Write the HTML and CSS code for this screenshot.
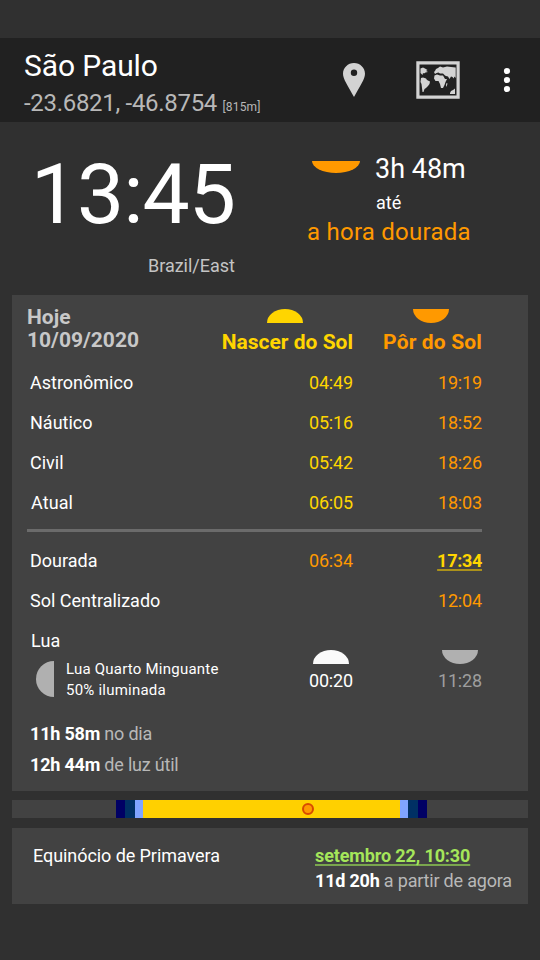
FILE: index.html
```html
<!DOCTYPE html>
<html lang="pt-BR">
<head>
<meta charset="utf-8">
<title>São Paulo</title>
<link rel="stylesheet" href="styles.css">
</head>
<body>
<header class="appbar">
  <div class="place">
    <div class="place-name">São Paulo</div>
    <div class="coords"><span class="latlon">-23.6821, -46.8754</span> <span class="altitude">[815m]</span></div>
  </div>
  <svg class="icon-pin" viewBox="0 0 22 34"><path fill-rule="evenodd" d="M11 0C4.900 0 0 4.800 0 10.700C0 16 4.800 22.500 11 34C17.200 22.500 22 16 22 10.700C22 4.800 17.100 0 11 0ZM11 6.600a3.200 3.200 0 1 1 0 6.400a3.200 3.200 0 1 1 0-6.400Z"/></svg>
  <svg class="icon-map" viewBox="0 0 44 38">
    <path fill-rule="evenodd" d="M0.300 0.300H43.700V37.700H0.300ZM3.500 3.500V34.500H40.500V3.500Z"/>
    <path d="M4.500 7.500L7 6.500L9 7.500L11.500 9L10 10L12 11L9.500 11.500L8 12.500L7 12L6.500 14L5 12.500L4.500 12ZM5 17L7 16.500L10 17.500L11 19L14 20.500L13.500 23L12 25L10 27L8.500 28L7.500 31L6.500 31L6 27L5.500 23L4.500 21ZM19 10L20 8L22 7L24 5.500L27 6.500L31 5.500L35 6L39.700 6.500V17L38.500 15.500L37.500 17.500L36.500 16L35 15.500L33.500 18L32 15.500L30 15L29 14.500L27 12.500L24 12.500L22.500 11.500L20.500 12L19 13L18 11ZM18.500 14.500L21 13.500L24 14.500L27 14.500L29 18L31 18L29.500 21L28.500 24L27 27L25 27L24 23L22.500 20L19.500 20L18 17.500ZM30.500 22L31.500 22.500L30.500 26L30 24ZM34 32L35 30L37 29L39 27.500V33H34Z"/>
  </svg>
  <svg class="icon-more" viewBox="0 0 6 24"><circle cx="3" cy="3" r="3.100"/><circle cx="3" cy="12" r="3.100"/><circle cx="3" cy="21" r="3.100"/></svg>
</header>

<section class="now">
  <div class="clock">
    <div class="time">13:45</div>
    <div class="zone">Brazil/East</div>
  </div>
  <div class="countdown">
    <div class="remaining"><i class="half down wide orange-bg"></i><span class="duration">3h 48m</span></div>
    <div class="until">até</div>
    <div class="event">a hora dourada</div>
  </div>
</section>

<section class="card sun">
  <div class="row head">
    <div class="date">Hoje<br>10/09/2020</div>
    <div class="col-title rise yellow"><i class="half up yellow-bg"></i><span>Nascer do Sol</span></div>
    <div class="col-title set orange"><i class="half down orange-bg"></i><span>Pôr do Sol</span></div>
  </div>
  <div class="row"><span class="label">Astronômico</span><span class="yellow">04:49</span><span class="orange">19:19</span></div>
  <div class="row"><span class="label">Náutico</span><span class="yellow">05:16</span><span class="orange">18:52</span></div>
  <div class="row"><span class="label">Civil</span><span class="yellow">05:42</span><span class="orange">18:26</span></div>
  <div class="row"><span class="label actual">Atual</span><span class="yellow">06:05</span><span class="orange">18:03</span></div>
  <div class="divider"></div>
  <div class="row"><span class="label">Dourada</span><span class="orange">06:34</span><span class="next yellow"><u>17:34</u></span></div>
  <div class="row"><span class="label">Sol Centralizado</span><span></span><span class="orange">12:04</span></div>
  <div class="row moon">
    <div class="moon-info">
      <div class="label moon-label">Lua</div>
      <div class="phase"><i class="quarter"></i><div class="phase-text"><span class="phase-name">Lua Quarto Minguante</span><br>50% iluminada</div></div>
    </div>
    <div class="moon-time white"><i class="half up white-bg"></i><span>00:20</span></div>
    <div class="moon-time gray"><i class="half down gray-bg"></i><span>11:28</span></div>
  </div>
  <div class="lengths">
    <div><b>11h 58m</b> no dia</div>
    <div><b>12h 44m</b> de luz útil</div>
  </div>
</section>

<div class="timeline">
  <i class="astro"></i><i class="nautical"></i><i class="civil"></i><i class="day"></i><i class="civil"></i><i class="nautical"></i><i class="astro"></i>
  <span class="marker"></span>
</div>

<section class="card season">
  <div class="season-name">Equinócio de Primavera</div>
  <div class="season-when">
    <div class="season-date"><u>setembro 22, 10:30</u></div>
    <div class="season-left"><b>11d 20h</b> a partir de agora</div>
  </div>
</section>
</body>
</html>
```
FILE: styles.css
```css
* { box-sizing: border-box; }

body {
  margin: 0;
  padding-top: 38px;
  width: 540px;
  height: 960px;
  overflow: hidden;
  background: #303030;
  color: #fff;
  font: 18px/40px Roboto, sans-serif;
  white-space: nowrap;
}

i { display: block; flex: none; }
b { font-weight: 700; color: #fff; }
u { text-underline-offset: 2px; text-decoration-thickness: 2px; text-decoration-skip-ink: none; }

.yellow { color: #ffd500; }
.orange { color: #ff9900; }
.white { color: #fff; }
.gray { color: #9e9e9e; }
.yellow-bg { background: #ffd500; }
.orange-bg { background: #ff9900; }
.white-bg { background: #fafafa; }
.gray-bg { background: #b0b0b0; }

/* App bar */
.appbar {
  display: flex;
  align-items: flex-start;
  height: 84px;
  padding-left: 24px;
  background: #212121;
}
.place { width: 319px; padding-top: 10px; }
.place-name { font-size: 30px; line-height: 36px; letter-spacing: -0.1px; }
.coords { padding-top: 1px; line-height: 36px; color: #b8b8b8; }
.latlon { font-size: 24px; letter-spacing: -0.3px; }
.altitude { margin-left: 1px; font-size: 12px; letter-spacing: 0.15px; }
.appbar svg { flex: none; fill: #d3d3d3; }
.icon-pin { width: 22px; height: 34px; margin-top: 25px; }
.icon-map { width: 44px; height: 38px; margin: 23px 0 0 51px; }
.appbar .icon-more { width: 6px; height: 24px; margin: 30px 0 0 44px; overflow: visible; fill: #fff; }

/* Current time and countdown */
.now { display: flex; height: 173px; }
.clock { width: 235px; padding-top: 23px; text-align: right; }
.time { font-size: 84px; line-height: 100px; letter-spacing: -1px; }
.zone { margin-top: 9px; line-height: 24px; color: #c4c4c4; }
.countdown { margin-left: 72px; padding-top: 30px; }
.remaining { display: flex; height: 34px; padding-left: 5px; }
.remaining .half { margin-top: 9px; }
.duration { margin-left: 15px; font-size: 27px; line-height: 34px; }
.until { padding-left: 69px; margin-top: 5px; line-height: 24px; }
.event { margin-top: 1px; font-size: 24px; line-height: 32px; letter-spacing: 0.25px; color: #ff9900; }

.half { width: 36px; height: 14px; }
.half.up { border-radius: 18px 18px 0 0 / 14px 14px 0 0; }
.half.down { border-radius: 0 0 18px 18px / 0 0 14px 14px; }
.half.wide { width: 48px; height: 12px; border-radius: 0 0 24px 24px / 0 0 12px 12px; }

/* Cards */
.card { margin: 0 12px; background: #424242; }
.sun { height: 496px; padding: 11px 46px 0 15px; }
.row {
  display: grid;
  grid-template-columns: 190px 136px 129px;
  height: 40px;
  text-align: right;
  letter-spacing: -0.15px;
}
.label { padding-left: 3px; text-align: left; letter-spacing: 0; color: #fff; }
.label.actual { padding-left: 4px; letter-spacing: 0.1px; }
.head { height: 57px; font-weight: 700; font-size: 21px; letter-spacing: 0; }
.date { text-align: left; line-height: 23px; color: #c8c8c8; }
.col-title { display: flex; flex-direction: column; align-items: center; padding-top: 3px; line-height: 24px; }
.col-title span { align-self: flex-end; margin-top: 7px; }
.set { padding-left: 26px; letter-spacing: 0.15px; }
.divider { height: 3px; margin: 6px 0 9px; background: #6b6b6b; }
.next { font-weight: 700; letter-spacing: -0.3px; }
.next u { text-decoration-color: #ab911a; }

.moon { height: 76px; }
.moon-label { padding-left: 4px; line-height: 40px; letter-spacing: 0.1px; }
.phase { display: flex; margin-top: -2px; padding-left: 9px; text-align: left; }
.quarter { width: 18px; height: 36px; margin-top: 2px; border-radius: 18px 0 0 18px; background: #b0b0b0; }
.phase-text { margin-left: 12px; font-size: 15px; line-height: 21px; letter-spacing: 0.22px; }
.moon-time { display: flex; flex-direction: column; align-items: flex-end; padding-top: 29px; line-height: 22px; }
.moon-time .half { margin: 0 4px 6px 0; }

.lengths { margin-top: 21px; padding-left: 3px; line-height: 31px; letter-spacing: -0.2px; color: #b8b8b8; }

/* Daylight timeline */
.timeline {
  position: relative;
  display: flex;
  height: 18px;
  margin: 9px 12px 10px;
  padding-left: 104px;
  background: #424242;
}
.astro { width: 9px; background: #000064; }
.nautical { width: 10px; background: #003064; }
.civil { width: 8px; background: #80a4ff; }
.day { width: 257px; background: #ffd000; }
.marker {
  position: absolute;
  left: 290px;
  top: 3px;
  width: 12px;
  height: 12px;
  border: 2px solid #d84a00;
  border-radius: 50%;
  background: #ff9900;
}

.season { display: flex; height: 76px; padding: 15px 0 0 21px; line-height: 25px; }
.season-name { width: 282px; letter-spacing: -0.07px; }
.season-date { font-weight: 700; letter-spacing: -0.12px; color: #a5e65a; }
.season-date u { text-decoration-color: #7aa64e; }
.season-left { letter-spacing: -0.2px; color: #b8b8b8; }
```
